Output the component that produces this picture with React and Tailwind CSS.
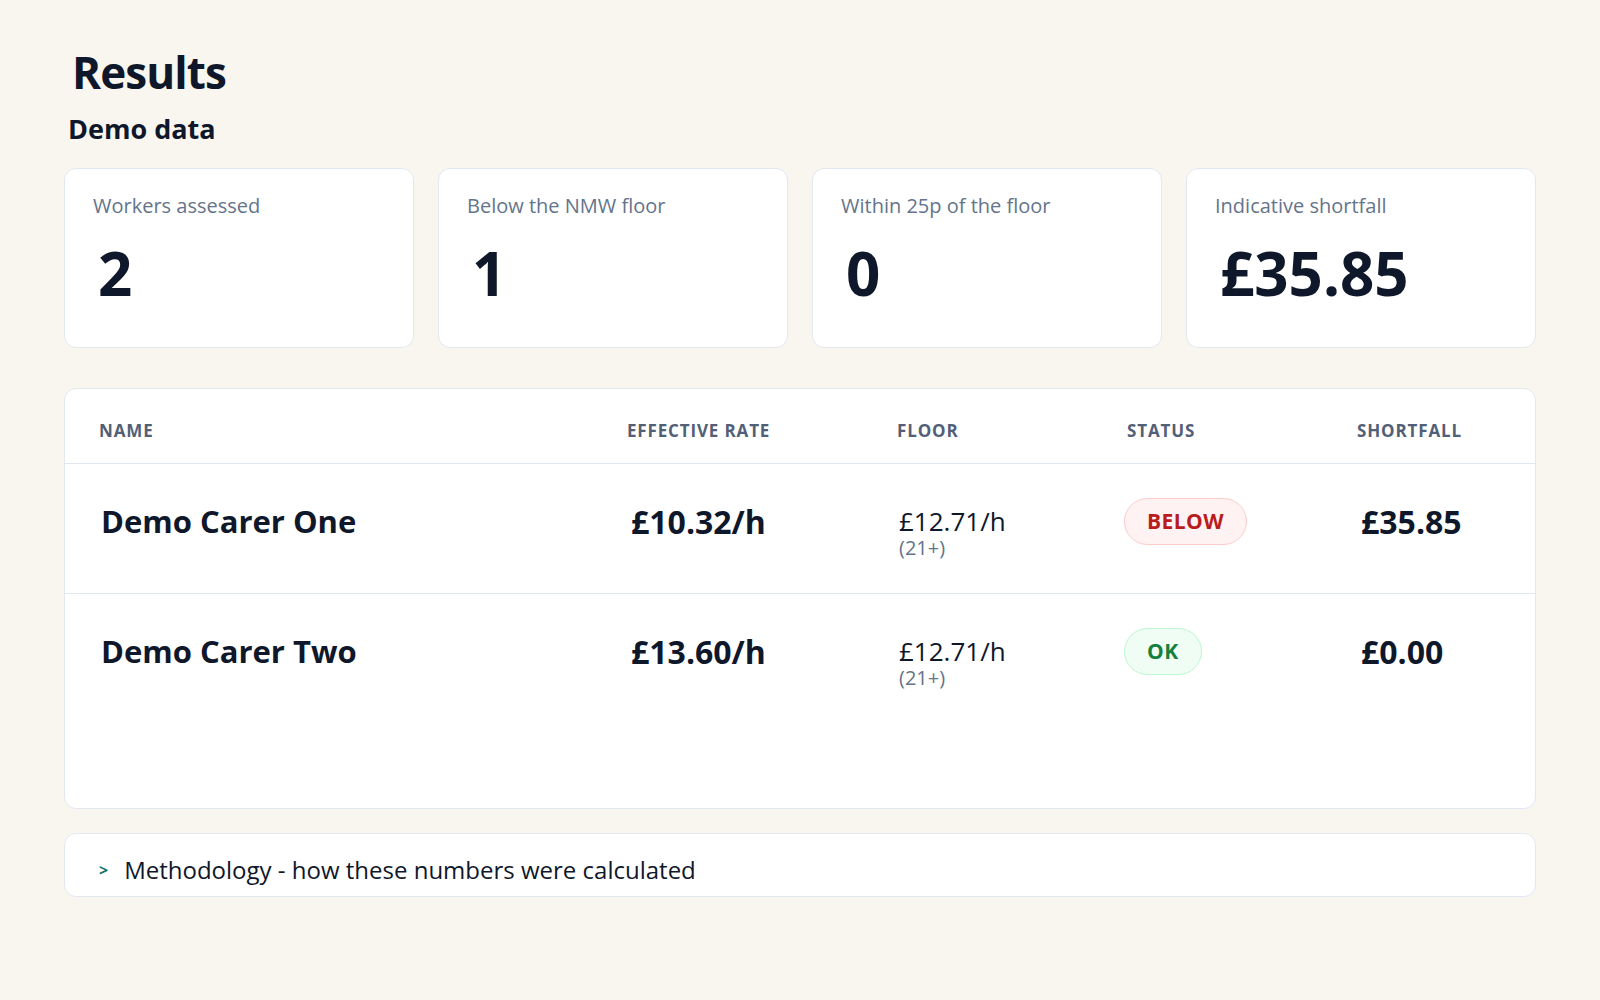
import React from "react";

const stats = [
    { label: "Workers assessed", value: "2" },
    { label: "Below the NMW floor", value: "1" },
    { label: "Within 25p of the floor", value: "0" },
    { label: "Indicative shortfall", value: "£35.85" },
];

const rows = [
    { name: "Demo Carer One", rate: "£10.32/h", floor: "£12.71/h", band: "(21+)", status: "BELOW", shortfall: "£35.85" },
    { name: "Demo Carer Two", rate: "£13.60/h", floor: "£12.71/h", band: "(21+)", status: "OK", shortfall: "£0.00" },
];

const cols = "grid grid-cols-[530px_270px_230px_230px_1fr]";

function StatusBadge({ status }) {
    if (status === "BELOW") {
        return (
            <span className="inline-block rounded-full border border-[#fecaca] bg-[#fef2f2] px-[22px] py-[8px] text-[21px] leading-[29px] font-bold tracking-[0.02em] text-[#b91c1c]">
                BELOW
            </span>
        );
    }
    return (
        <span className="inline-block rounded-full border border-[#bbf7d0] bg-[#f0fdf4] px-[22px] py-[8px] text-[21px] leading-[29px] font-bold tracking-[0.02em] text-[#15803d]">
            OK
        </span>
    );
}

export default function App() {
    return (
        <div
            className="min-h-screen bg-[#f9f6f0] px-16 pt-[46px] pb-10 text-[#0f172a]"
            style={{ fontFamily: '"Open Sans", "Noto Sans", sans-serif' }}
        >
            <h1 className="pl-2 text-[44px] leading-[1.2] font-bold tracking-[-0.02em]">Results</h1>
            <h2 className="mt-[12px] pl-1 text-[27px] leading-[1.3] font-bold">Demo data</h2>

            <div className="mt-[22px] grid grid-cols-4 gap-6">
                {stats.map((s) => (
                    <div
                        key={s.label}
                        className="h-[180px] rounded-xl border border-[#e2e8f0] bg-white px-[28px] pt-[23px]"
                    >
                        <div className="text-[20px] leading-[28px] text-[#64748b]">{s.label}</div>
                        <div className="mt-[23px] pl-[5px] text-[60px] leading-none font-bold">{s.value}</div>
                    </div>
                ))}
            </div>

            <div className="mt-10 rounded-xl border border-[#e2e8f0] bg-white pb-[85px]">
                <div className={`${cols} border-b border-[#e2e8f0] pt-[30px] pb-[20px]`}>
                    {["NAME", "EFFECTIVE RATE", "FLOOR", "STATUS", "SHORTFALL"].map((h, i) => (
                        <div
                            key={h}
                            className={`${i === 0 ? "pl-[34px]" : "pl-8"} text-[17px] leading-[24px] font-bold tracking-[0.05em] text-[#526077]`}
                        >
                            {h}
                        </div>
                    ))}
                </div>
                {rows.map((r, i) => (
                    <div
                        key={r.name}
                        className={`${cols} items-start pt-[34px] pb-[34px] ${i < rows.length - 1 ? "border-b border-[#e2e8f0]" : ""}`}
                    >
                        <div className="pl-[36px] text-[31px] leading-[47px] font-bold">{r.name}</div>
                        <div className="pl-[36px] text-[32px] leading-[47px] font-bold">{r.rate}</div>
                        <div className="pl-[34px] pt-[8px]">
                            <div className="text-[26px] leading-[31px]">{r.floor}</div>
                            <div className="text-[20px] leading-[22px] text-[#64748b]">{r.band}</div>
                        </div>
                        <div className="pl-[29px]">
                            <StatusBadge status={r.status} />
                        </div>
                        <div className="pl-[36px] text-[32px] leading-[47px] font-bold">{r.shortfall}</div>
                    </div>
                ))}
            </div>

            <div className="mt-6 flex items-center gap-[16px] rounded-xl border border-[#e2e8f0] bg-white pt-[18px] pb-[8px] pl-[34px]">
                <span className="text-[16px] leading-[36px] font-bold text-[#0f766e]">&gt;</span>
                <span className="text-[24px] leading-[36px]">Methodology - how these numbers were calculated</span>
            </div>
        </div>
    );
}
